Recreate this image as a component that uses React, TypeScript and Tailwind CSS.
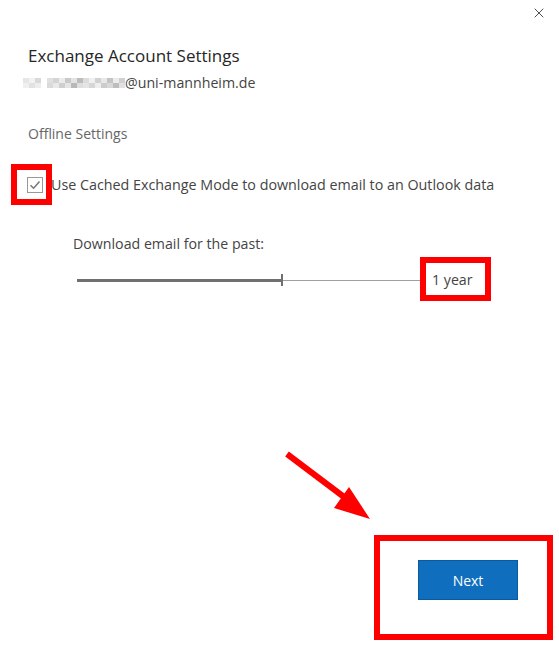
import { X } from 'lucide-react'

// pixelated redaction of the user name, two rows of blocks
const pixels = [
  ['#e6e6e6', '#f2f2f2', '#d9d9d9', '#fff', '#e0e0e0', '#d4d4d4', '#ebebeb', '#c9c9c9', '#e3e3e3', '#bcbcbc', '#dcdcdc', '#f0f0f0', '#d1d1d1', '#e8e8e8', '#c4c4c4', '#ececec', '#d0d0d0'],
  ['#f0f0f0', '#e2e2e2', '#ededed', '#fff', '#dadada', '#e9e9e9', '#cfcfcf', '#e5e5e5', '#b8b8b8', '#dedede', '#e4e4e4', '#d6d6d6', '#eeeeee', '#cccccc', '#d8d8d8', '#bdbdbd', '#e1e1e1'],
]

function Redacted() {
  return (
    <div className="flex flex-col">
      {pixels.map((row, r) => (
        <div key={r} className="flex">
          {row.map((c, i) => (
            <div key={i} className="w-[6px] h-[5px]" style={{ backgroundColor: c }} />
          ))}
        </div>
      ))}
    </div>
  )
}

// red annotation frame drawn over the dialog
function Frame({ className }: { className: string }) {
  return <div className={`absolute border-[6px] border-[#ff0000] ${className}`} />
}

export default function App() {
  return (
    <div className="relative w-[559px] h-[657px] bg-white font-['Segoe_UI','Open_Sans',sans-serif] text-[#444]">
      {/* Title bar */}
      <div className="flex justify-end pt-[5px] pr-[12px]">
        <X size={16} strokeWidth={1.3} className="text-[#333]" />
      </div>

      {/* Header */}
      <div className="pl-[28px] pt-[24px]">
        <h1 className="text-[17px] leading-[22px] text-[#262626]">Exchange Account Settings</h1>
        <div className="flex items-center mt-[6px] text-[14.2px] leading-[20px] -ml-[5px]">
          <Redacted />
          <span>@uni-mannheim.de</span>
        </div>
      </div>

      {/* Offline settings */}
      <div className="pl-[28px] pt-[31px] text-[14px] leading-[20px] text-[#666]">Offline Settings</div>

      <label className="flex items-center gap-[8px] pl-[27px] mt-[31px] text-[14.3px] leading-[20px]">
        <span className="flex items-center justify-center w-[16px] h-[16px] border border-[#999] bg-white">
          <svg width="14" height="14" viewBox="0 0 14 14">
            <path d="M2.5 7.2 L5.6 10.2 L11.5 3.5" fill="none" stroke="#777" strokeWidth="1.5" />
          </svg>
        </span>
        <span>Use Cached Exchange Mode to download email to an Outlook data</span>
      </label>

      {/* Download period */}
      <div className="pl-[73px] mt-[39px]">
        <div className="text-[14.2px] leading-[20px]">Download email for the past:</div>
        <div className="flex items-center mt-[16px]">
          <div className="flex items-center w-[343px] ml-[4px]">
            <div className="w-[204px] h-[3px] bg-[#707070]" />
            <div className="w-[2px] h-[12px] bg-[#707070]" />
            <div className="flex-1 h-px bg-[#a0a0a0]" />
          </div>
          <span className="ml-[12px] text-[14.2px] leading-[20px]">1 year</span>
        </div>
      </div>

      {/* Footer */}
      <div className="absolute left-[418px] top-[560px]">
        <button className="w-[100px] h-[40px] bg-[#106ebe] border border-[#0a5a9e] text-white text-[14px]">Next</button>
      </div>

      {/* Annotations */}
      <Frame className="left-[11px] top-[164px] w-[41px] h-[41px]" />
      <Frame className="left-[420px] top-[257px] w-[71px] h-[44px]" />
      <Frame className="left-[374px] top-[535px] w-[179px] h-[105px]" />
      <svg className="absolute left-0 top-0 pointer-events-none" width="559" height="657">
        <line x1="287" y1="454" x2="352" y2="503" stroke="#ff0000" strokeWidth="6" />
        <polygon points="370,519 349,487 334,508" fill="#ff0000" />
      </svg>
    </div>
  )
}
